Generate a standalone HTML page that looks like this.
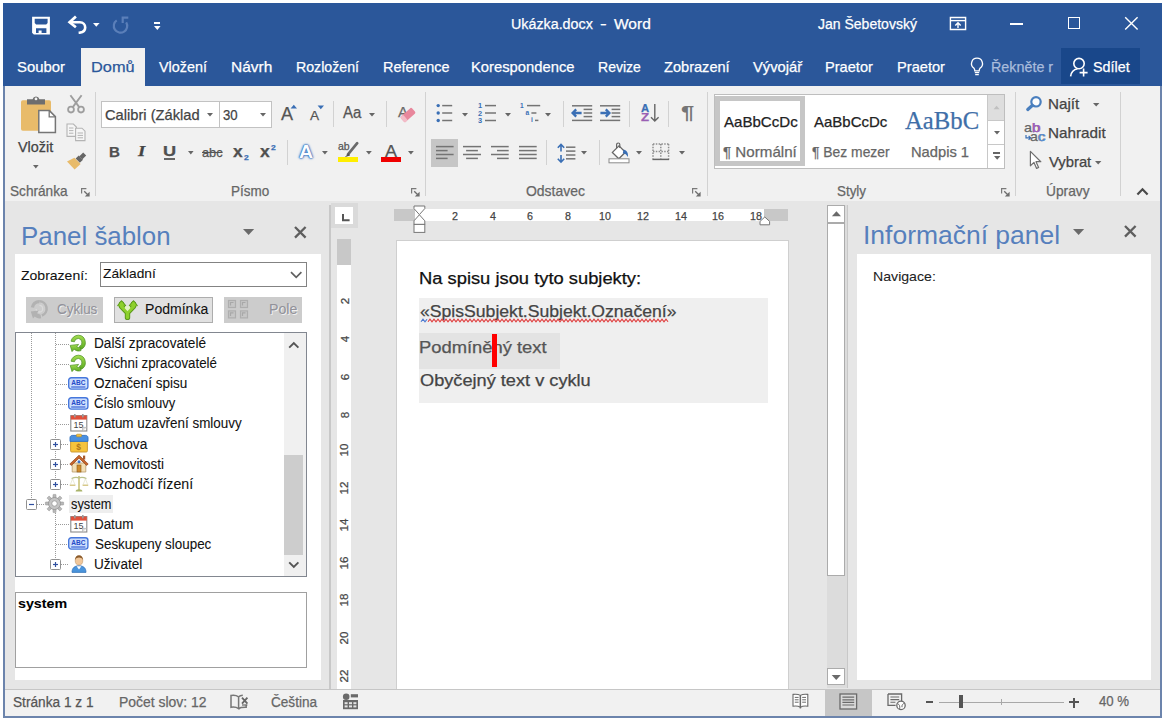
<!DOCTYPE html>
<html><head><meta charset="utf-8"><title>Ukázka.docx - Word</title>
<style>
html,body{margin:0;padding:0;background:#fff;}
body{width:1165px;height:721px;position:relative;overflow:hidden;font-family:"Liberation Sans",sans-serif;}
.r{position:absolute;display:block;overflow:visible;}
.t{position:absolute;white-space:nowrap;transform-origin:0 50%;-webkit-text-stroke-width:.25px;}
.ns .t{-webkit-text-stroke-width:.08px;}
#w{position:absolute;left:0;top:0;width:1165px;height:721px;}
</style></head><body><div id="w">
<!-- p_title -->
<div class="r" style="left:3.2px;top:3.1px;width:1158.7px;height:714px;background:#e6e6e6;"></div>
<div class="r" style="left:3.2px;top:3.1px;width:1158.7px;height:82.7px;background:#2b579a;"></div>
<svg class="r" style="left:31px;top:16px;" width="20" height="20" viewBox="0 0 20 20"><path d="M1.100 .800h17.800v17.600H2.800L1.100 16.700z" fill="#fff"/><path d="M3.700 2.700h12.900v4.300l-1.400 1.400H5.100L3.700 7z" fill="#2b579a"/><path d="M5 12.200h10.400v4.900h-4.800v-2.500H7.600v2.500H5z" fill="#2b579a"/></svg>
<svg class="r" style="left:67px;top:15px;" width="21" height="20" viewBox="0 0 21 20"><path d="M2.600 7.300h10.200c3.400 0 5.400 2.400 5.400 5.200 0 2.700-2 4.700-5.400 5.100l-1.200 .100" fill="none" stroke="#fff" stroke-width="2.600"/><path d="M8.900 1.600L2.600 7.300l6.300 5" fill="none" stroke="#fff" stroke-width="2.700"/></svg>
<svg class="r" style="left:92.2px;top:22.1px;" width="8.6" height="5.8" viewBox="0 0 8.6 5.8"><path d="M1 1h6.6l-3.3 3.8z" fill="#fff"/></svg>
<svg class="r" style="left:111px;top:15px;" width="20" height="20" viewBox="0 0 20 20"><path d="M5.700 5.400A6.700 6.700 0 1 0 15.200 7.400" fill="none" stroke="#5b7fb9" stroke-width="2.200"/><path d="M11.700 8V2.700h5.600" fill="none" stroke="#5b7fb9" stroke-width="2.200"/></svg>
<div class="r" style="left:153.5px;top:22px;width:6.6px;height:1.6px;background:#fff;"></div>
<svg class="r" style="left:152.5px;top:24.95px;" width="8.6" height="5.9" viewBox="0 0 8.6 5.9"><path d="M1 1h6.6l-3.3 3.9z" fill="#fff"/></svg>
<div class="t" style="left:510.73px;top:12.70px;height:22px;line-height:22px;font-size:15.5px;color:#fff;transform:scaleX(0.9220);">Ukázka.docx</div>
<div class="t" style="left:600.20px;top:12.70px;height:22px;line-height:22px;font-size:15.5px;color:#fff;transform:scaleX(1.2903);">-</div>
<div class="t" style="left:614.20px;top:12.70px;height:22px;line-height:22px;font-size:15.5px;color:#fff;transform:scaleX(0.9999);">Word</div>
<div class="t" style="left:817.79px;top:12.70px;height:22px;line-height:22px;font-size:15.5px;color:#fff;transform:scaleX(0.9039);">Jan Šebetovský</div>
<svg class="r" style="left:949px;top:16px;" width="18" height="15" viewBox="0 0 18 15"><path d="M1.4 1.5h15.2v12H1.4z" fill="none" stroke="#fff" stroke-width="1.4"/><path d="M1.4 4.6h15.2" stroke="#fff" stroke-width="1.4"/><path d="M9 12V7M6.3 9.4L9 6.7l2.7 2.7" fill="none" stroke="#fff" stroke-width="1.4"/></svg>
<div class="r" style="left:1010px;top:23px;width:12.5px;height:1.5px;background:#fff;"></div>
<div class="r" style="left:1067.5px;top:16.7px;width:12.2px;height:12.5px;border:1.4px solid #fff;box-sizing:border-box;"></div>
<svg class="r" style="left:1124px;top:15.7px;" width="15" height="15" viewBox="0 0 15 15"><path d="M1.2 1.2l12.4 12.4M13.6 1.2L1.2 13.6" stroke="#fff" stroke-width="1.4"/></svg>
<div class="r" style="left:81.2px;top:48.2px;width:63.5px;height:38px;background:#f1f1f1;"></div>
<div class="t" style="left:16.63px;top:56.40px;height:21px;line-height:21px;font-size:15px;color:#fff;transform:scaleX(0.9921);">Soubor</div>
<div class="t" style="left:158.90px;top:56.40px;height:21px;line-height:21px;font-size:15px;color:#fff;transform:scaleX(0.9575);">Vložení</div>
<div class="t" style="left:230.56px;top:56.40px;height:21px;line-height:21px;font-size:15px;color:#fff;transform:scaleX(1.0323);">Návrh</div>
<div class="t" style="left:296.17px;top:56.40px;height:21px;line-height:21px;font-size:15px;color:#fff;transform:scaleX(0.9439);">Rozložení</div>
<div class="t" style="left:382.64px;top:56.40px;height:21px;line-height:21px;font-size:15px;color:#fff;transform:scaleX(0.9626);">Reference</div>
<div class="t" style="left:471.42px;top:56.40px;height:21px;line-height:21px;font-size:15px;color:#fff;transform:scaleX(0.9857);">Korespondence</div>
<div class="t" style="left:598.18px;top:56.40px;height:21px;line-height:21px;font-size:15px;color:#fff;transform:scaleX(0.9358);">Revize</div>
<div class="t" style="left:663.76px;top:56.40px;height:21px;line-height:21px;font-size:15px;color:#fff;transform:scaleX(0.9724);">Zobrazení</div>
<div class="t" style="left:752.50px;top:56.40px;height:21px;line-height:21px;font-size:15px;color:#fff;transform:scaleX(0.9836);">Vývojář</div>
<div class="t" style="left:825.33px;top:56.40px;height:21px;line-height:21px;font-size:15px;color:#fff;transform:scaleX(0.9733);">Praetor</div>
<div class="t" style="left:896.53px;top:56.40px;height:21px;line-height:21px;font-size:15px;color:#fff;transform:scaleX(0.9754);">Praetor</div>
<div class="t" style="left:91.39px;top:56.40px;height:21px;line-height:21px;font-size:15px;color:#2b579a;transform:scaleX(1.0899);">Domů</div>
<svg class="r" style="left:969px;top:56px;" width="16" height="21" viewBox="0 0 16 21"><path d="M8 2.2a5.4 5.4 0 0 0-3.2 9.8c.8.8 1 1.6 1 2.8h4.4c0-1.2.2-2 1-2.8A5.4 5.4 0 0 0 8 2.2z" fill="none" stroke="#fff" stroke-width="1.3"/><path d="M5.8 16.6h4.4M6.2 18.6h3.6" stroke="#fff" stroke-width="1.2"/></svg>
<div class="t" style="left:990.55px;top:56.40px;height:21px;line-height:21px;font-size:15px;color:#a9bcdc;transform:scaleX(0.9548);">Řekněte r</div>
<div class="r" style="left:1061.3px;top:48.2px;width:78.8px;height:35.8px;background:#19478a;"></div>
<svg class="r" style="left:1068px;top:56px;" width="22" height="23" viewBox="0 0 22 23"><circle cx="11" cy="7.6" r="5.2" fill="none" stroke="#fff" stroke-width="1.6"/><path d="M2.6 20.4c.6-4.4 3.6-7 7-7.6" fill="none" stroke="#fff" stroke-width="1.6"/><path d="M15.6 12.6v8M11.6 16.6h8" stroke="#fff" stroke-width="1.6"/></svg>
<div class="t" style="left:1093.05px;top:56.40px;height:21px;line-height:21px;font-size:15px;color:#fff;transform:scaleX(0.9562);">Sdílet</div>
<!-- p_ribbon -->
<div class="r" style="left:4.8px;top:85.8px;width:1155.3px;height:115.2px;background:#f1f1f1;"></div>
<div class="r" style="left:3.3px;top:85.8px;width:1.7px;height:115.2px;background:#6c84ac;"></div>
<div class="r" style="left:1160.3px;top:85.8px;width:1.6px;height:115.2px;background:#6c84ac;"></div>
<div class="r" style="left:95.0px;top:92px;width:1px;height:104px;background:#d2d2d2;"></div>
<div class="r" style="left:424.8px;top:92px;width:1px;height:104px;background:#d2d2d2;"></div>
<div class="r" style="left:706.8px;top:92px;width:1px;height:104px;background:#d2d2d2;"></div>
<div class="r" style="left:1015.0px;top:92px;width:1px;height:104px;background:#d2d2d2;"></div>
<div class="r" style="left:1120.2px;top:92px;width:1px;height:104px;background:#d2d2d2;"></div>
<div class="r" style="left:333.0px;top:100.5px;width:1px;height:26.5px;background:#d2d2d2;"></div>
<div class="r" style="left:385.8px;top:100.5px;width:1px;height:26.5px;background:#d2d2d2;"></div>
<div class="r" style="left:562.5px;top:100.5px;width:1px;height:26.5px;background:#d2d2d2;"></div>
<div class="r" style="left:628.9px;top:100.5px;width:1px;height:26.5px;background:#d2d2d2;"></div>
<div class="r" style="left:667.9px;top:100.5px;width:1px;height:26.5px;background:#d2d2d2;"></div>
<div class="r" style="left:287.0px;top:139.6px;width:1px;height:25.2px;background:#d2d2d2;"></div>
<div class="r" style="left:546.2px;top:139.6px;width:1px;height:25.2px;background:#d2d2d2;"></div>
<div class="r" style="left:598.9px;top:139.6px;width:1px;height:25.2px;background:#d2d2d2;"></div>
<div class="t" style="left:9.69px;top:180.70px;height:20px;line-height:20px;font-size:14.5px;color:#666;transform:scaleX(0.9393);">Schránka</div>
<div class="t" style="left:230.92px;top:180.70px;height:20px;line-height:20px;font-size:14.5px;color:#666;transform:scaleX(0.9297);">Písmo</div>
<div class="t" style="left:526.37px;top:180.70px;height:20px;line-height:20px;font-size:14.5px;color:#666;transform:scaleX(0.9627);">Odstavec</div>
<div class="t" style="left:836.70px;top:180.70px;height:20px;line-height:20px;font-size:14.5px;color:#666;transform:scaleX(0.9239);">Styly</div>
<div class="t" style="left:1046.47px;top:180.70px;height:20px;line-height:20px;font-size:14.5px;color:#666;transform:scaleX(0.9470);">Úpravy</div>
<svg class="r" style="left:81.2px;top:187.6px;" width="9" height="9" viewBox="0 0 9 9"><path d="M0.600 5.400V0.600H5.400" fill="none" stroke="#7a7a7a" stroke-width="1.200"/><path d="M3.200 3.200l3.600 3.600" fill="none" stroke="#6e6e6e" stroke-width="1.300"/><path d="M8.600 3.800V8.600H3.800z" fill="#6e6e6e"/></svg>
<svg class="r" style="left:410.9px;top:187.6px;" width="9" height="9" viewBox="0 0 9 9"><path d="M0.600 5.400V0.600H5.400" fill="none" stroke="#7a7a7a" stroke-width="1.200"/><path d="M3.200 3.200l3.600 3.600" fill="none" stroke="#6e6e6e" stroke-width="1.300"/><path d="M8.600 3.800V8.600H3.800z" fill="#6e6e6e"/></svg>
<svg class="r" style="left:692.4px;top:187.6px;" width="9" height="9" viewBox="0 0 9 9"><path d="M0.600 5.400V0.600H5.400" fill="none" stroke="#7a7a7a" stroke-width="1.200"/><path d="M3.200 3.200l3.600 3.600" fill="none" stroke="#6e6e6e" stroke-width="1.300"/><path d="M8.600 3.800V8.600H3.800z" fill="#6e6e6e"/></svg>
<svg class="r" style="left:1001px;top:187.6px;" width="9" height="9" viewBox="0 0 9 9"><path d="M0.600 5.400V0.600H5.400" fill="none" stroke="#7a7a7a" stroke-width="1.200"/><path d="M3.200 3.200l3.600 3.600" fill="none" stroke="#6e6e6e" stroke-width="1.300"/><path d="M8.600 3.800V8.600H3.800z" fill="#6e6e6e"/></svg>
<svg class="r" style="left:1136px;top:187px;" width="13" height="9" viewBox="0 0 13 9"><path d="M1.4 7.4L6.5 2.2l5.1 5.2" fill="none" stroke="#4a4a4a" stroke-width="2.200"/></svg>
<svg class="r" style="left:20px;top:95px;" width="38" height="40" viewBox="0 0 38 40"><rect x="1" y="5.200" width="30" height="30.600" rx="1.800" fill="#e8bb6a"/><path d="M7 9.400V4.200h5.600a3.500 3.500 0 0 1 6.800 0H25v5.200z" fill="#6e6e6e"/><circle cx="16" cy="3.900" r="1.400" fill="#f1f1f1"/><path d="M18.8 15.6h10.6l6 6V37.4H18.8z" fill="#fff" stroke="#757575" stroke-width="1.500"/><path d="M29.200 15.800v6h6" fill="none" stroke="#757575" stroke-width="1.300"/></svg>
<div class="t" style="left:17.70px;top:136.50px;height:21px;line-height:21px;font-size:14.8px;color:#444;transform:scaleX(0.9728);">Vložit</div>
<svg class="r" style="left:31.6px;top:164.0px;" width="7.6" height="5.6" viewBox="0 0 7.6 5.6"><path d="M1 1h5.6l-2.8 3.6z" fill="#666"/></svg>
<svg class="r" style="left:66px;top:93.5px;" width="20" height="20" viewBox="0 0 20 20"><path d="M4.4 1.2l9 12.2M15.6 1.2l-9 12.2" stroke="#9e9e9e" stroke-width="1.9" fill="none"/><circle cx="5" cy="15.6" r="2.9" fill="none" stroke="#9e9e9e" stroke-width="1.8"/><circle cx="15" cy="15.6" r="2.9" fill="none" stroke="#9e9e9e" stroke-width="1.8"/></svg>
<svg class="r" style="left:65.5px;top:123px;" width="21" height="19" viewBox="0 0 21 19"><path d="M1 1h6.4l3 3v9.4H1z" fill="#f6f6f6" stroke="#b4b4b4" stroke-width="1.1"/><path d="M3 5h4.4M3 7.6h4.4M3 10.2h4.4" stroke="#b4b4b4" stroke-width="1"/><path d="M9.6 5.2h6.4l3 3v9.4H9.6z" fill="#f6f6f6" stroke="#b4b4b4" stroke-width="1.1"/><path d="M11.6 10h5.4M11.6 12.4h5.4M11.6 14.8h5.4" stroke="#b4b4b4" stroke-width="1"/></svg>
<svg class="r" style="left:66px;top:151.5px;" width="21" height="19" viewBox="0 0 21 19"><path d="M13.4 4.2l3.8-3.6 3 3-3.8 3.6z" fill="#666"/><path d="M9.6 6.6l3.2-3 4.2 4.2-3.2 3z" fill="#666"/><path d="M1 9.6l7.4-3.8 6.2 6.2-6 5.4z" fill="#e8bb6a"/></svg>
<div class="r" style="left:101px;top:100.5px;width:119px;height:27.5px;background:#fff;border:1px solid #c2c2c2;box-sizing:border-box;"></div>
<div class="r" style="left:219px;top:100.5px;width:53.4px;height:27.5px;background:#fff;border:1px solid #c2c2c2;box-sizing:border-box;"></div>
<div class="t" style="left:104.87px;top:104.50px;height:21px;line-height:21px;font-size:14.8px;color:#444;transform:scaleX(0.9919);">Calibri (Základ</div>
<svg class="r" style="left:205.7px;top:111.5px;" width="8" height="5.6" viewBox="0 0 8 5.6"><path d="M1 1h6l-3.0 3.6z" fill="#666"/></svg>
<div class="t" style="left:223.04px;top:104.50px;height:21px;line-height:21px;font-size:14.8px;color:#444;transform:scaleX(0.8901);">30</div>
<svg class="r" style="left:259.4px;top:111.5px;" width="8" height="5.6" viewBox="0 0 8 5.6"><path d="M1 1h6l-3.0 3.6z" fill="#666"/></svg>
<div class="t" style="left:281.00px;top:102.20px;height:25px;line-height:25px;font-size:17.6px;color:#555;transform:scaleX(1.0253);">A</div>
<svg class="r" style="left:289.8px;top:104px;" width="8" height="5" viewBox="0 0 8 5"><path d="M0.6 4.4L3.8 0.8 7 4.4z" fill="#3a6fb5"/></svg>
<div class="t" style="left:309.70px;top:108.20px;height:17px;line-height:17px;font-size:12.4px;color:#555;transform:scaleX(1.1036);">A</div>
<svg class="r" style="left:317.4px;top:104.6px;" width="8" height="5" viewBox="0 0 8 5"><path d="M0.6 0.6h6.4L3.8 4.2z" fill="#3a6fb5"/></svg>
<div class="t" style="left:343.30px;top:101.70px;height:22px;line-height:22px;font-size:15.6px;color:#555;transform:scaleX(0.9628);">Aa</div>
<svg class="r" style="left:367.5px;top:111.8px;" width="8" height="5.6" viewBox="0 0 8 5.6"><path d="M1 1h6l-3.0 3.6z" fill="#666"/></svg>
<div class="t" style="left:397.60px;top:101.00px;height:21px;line-height:21px;font-size:15px;color:#6a6a6a;transform:scaleX(1.0025);">A</div>
<svg class="r" style="left:399px;top:106px;" width="18" height="18" viewBox="0 0 18 18"><g transform="rotate(-42 9 9)"><rect x="1.5" y="5.4" width="15" height="7.2" rx="1.6" fill="#e8879c"/><rect x="1.5" y="5.4" width="4" height="7.2" rx="1.2" fill="#f3bcc8"/></g></svg>
<div class="t" style="left:108.52px;top:140.80px;height:21px;line-height:21px;font-size:15px;color:#505050;font-weight:700;transform:scaleX(1.0081);">B</div>
<div class="t" style="left:138.19px;top:140.30px;height:22px;line-height:22px;font-size:15.5px;color:#444;font-weight:700;font-style:italic;font-family:'Liberation Serif',serif;transform:scaleX(1.2003);">I</div>
<div class="t" style="left:162.91px;top:141.40px;height:20px;line-height:20px;font-size:14.6px;color:#505050;font-weight:700;transform:scaleX(1.2453);">U</div>
<div class="r" style="left:164px;top:158.4px;width:11px;height:1.3px;background:#666;"></div>
<svg class="r" style="left:187.0px;top:149.9px;" width="7.6" height="5.4" viewBox="0 0 7.6 5.4"><path d="M1 1h5.6l-2.8 3.4z" fill="#666"/></svg>
<div class="t" style="left:202.39px;top:143.00px;height:19px;line-height:19px;font-size:13.5px;color:#555;transform:scaleX(0.9445);text-decoration:line-through;">abc</div>
<div class="t" style="left:232.91px;top:140.50px;height:22px;line-height:22px;font-size:16px;color:#505050;font-weight:700;transform:scaleX(1.0894);">x</div>
<div class="t" style="left:243.74px;top:152.50px;height:10px;line-height:10px;font-size:7.4px;color:#3a6fb5;font-weight:700;transform:scaleX(1.1583);">2</div>
<div class="t" style="left:260.31px;top:140.50px;height:22px;line-height:22px;font-size:16px;color:#505050;font-weight:700;transform:scaleX(1.1009);">x</div>
<div class="t" style="left:271.14px;top:143.10px;height:10px;line-height:10px;font-size:7.4px;color:#3a6fb5;font-weight:700;transform:scaleX(1.1583);">2</div>
<div class="t" style="left:299.11px;top:138.90px;height:26px;line-height:26px;font-size:18.4px;color:#fbfdff;font-weight:700;transform:scaleX(1.0628);-webkit-text-stroke:0;text-shadow:0 0 1.2px #3470bd,0 0 1.2px #3470bd,0 0 1.6px #3470bd,0 0 2.4px #6c9bd6,0 0 3px #8fb3e0;">A</div>
<svg class="r" style="left:321.1px;top:149.9px;" width="7.8" height="5.4" viewBox="0 0 7.8 5.4"><path d="M1 1h5.8l-2.9 3.4z" fill="#666"/></svg>
<div class="t" style="left:337.78px;top:139.30px;height:15px;line-height:15px;font-size:11px;color:#555;transform:scaleX(0.9532);">ab</div>
<svg class="r" style="left:342px;top:141px;" width="18" height="18" viewBox="0 0 18 18"><path d="M15.200 2.200L6 13.400" stroke="#6a6a6a" stroke-width="2.700" stroke-linecap="round"/><path d="M6.800 12.200L2.600 16.200l5.400-1.600z" fill="#555"/></svg>
<div class="r" style="left:338px;top:157.2px;width:20px;height:4.7px;background:#ffee00;"></div>
<svg class="r" style="left:365.1px;top:149.9px;" width="7.8" height="5.4" viewBox="0 0 7.8 5.4"><path d="M1 1h5.8l-2.9 3.4z" fill="#666"/></svg>
<div class="t" style="left:385.00px;top:139.00px;height:24px;line-height:24px;font-size:17.2px;color:#555;transform:scaleX(1.0491);">A</div>
<div class="r" style="left:380.6px;top:157.2px;width:20.4px;height:4.7px;background:#f00000;"></div>
<svg class="r" style="left:407.3px;top:149.9px;" width="7.8" height="5.4" viewBox="0 0 7.8 5.4"><path d="M1 1h5.8l-2.9 3.4z" fill="#666"/></svg>
<svg class="r" style="left:436px;top:103px;" width="18" height="20" viewBox="0 0 18 20"><circle cx="2.2" cy="2.6" r="1.7" fill="#3a6fb5"/><path d="M6.2 2.6H16.2" stroke="#747474" stroke-width="1.5"/><circle cx="2.2" cy="10.0" r="1.7" fill="#3a6fb5"/><path d="M6.2 10.0H16.2" stroke="#747474" stroke-width="1.5"/><circle cx="2.2" cy="17.5" r="1.7" fill="#3a6fb5"/><path d="M6.2 17.5H16.2" stroke="#747474" stroke-width="1.5"/></svg>
<svg class="r" style="left:461.2px;top:111.8px;" width="8" height="5.6" viewBox="0 0 8 5.6"><path d="M1 1h6l-3.0 3.6z" fill="#666"/></svg>
<svg class="r" style="left:478.2px;top:103px;" width="19" height="21" viewBox="0 0 19 21"><text x="0" y="5.2" font-size="7.4" font-weight="700" fill="#3a6fb5" font-family="Liberation Sans">1</text><path d="M7 2.6H18" stroke="#747474" stroke-width="1.5"/><text x="0" y="12.6" font-size="7.4" font-weight="700" fill="#3a6fb5" font-family="Liberation Sans">2</text><path d="M7 10.0H18" stroke="#747474" stroke-width="1.5"/><text x="0" y="20.1" font-size="7.4" font-weight="700" fill="#3a6fb5" font-family="Liberation Sans">3</text><path d="M7 17.5H18" stroke="#747474" stroke-width="1.5"/></svg>
<svg class="r" style="left:503.9px;top:111.8px;" width="8" height="5.6" viewBox="0 0 8 5.6"><path d="M1 1h6l-3.0 3.6z" fill="#666"/></svg>
<svg class="r" style="left:519.9px;top:103px;" width="21" height="21" viewBox="0 0 21 21"><text x="0" y="5" font-size="6.6" font-weight="700" fill="#3a6fb5" font-family="Liberation Sans">1</text><path d="M7 2.6H20.2" stroke="#747474" stroke-width="1.5"/><text x="5.4" y="12" font-size="6.6" font-weight="700" fill="#3a6fb5" font-family="Liberation Sans">a</text><path d="M11.4 10H16.4" stroke="#747474" stroke-width="1.5"/><text x="11" y="19.4" font-size="6.6" font-weight="700" fill="#3a6fb5" font-family="Liberation Sans">i</text><path d="M15 17.4H18.4" stroke="#747474" stroke-width="1.5"/></svg>
<svg class="r" style="left:544.0px;top:111.8px;" width="8" height="5.6" viewBox="0 0 8 5.6"><path d="M1 1h6l-3.0 3.6z" fill="#666"/></svg>
<svg class="r" style="left:572.3px;top:105px;" width="21" height="17" viewBox="0 0 21 17"><path d="M0 0.8H20.2" stroke="#747474" stroke-width="1.5"/><path d="M11.6 4.4H20.2" stroke="#747474" stroke-width="1.5"/><path d="M11.6 8H20.2" stroke="#747474" stroke-width="1.5"/><path d="M11.6 11.6H20.2" stroke="#747474" stroke-width="1.5"/><path d="M0 15.4H20.2" stroke="#747474" stroke-width="1.5"/><path d="M0.6 8H9.6M4.2 4.4L0.6 8l3.6 3.6" fill="none" stroke="#3a6fb5" stroke-width="2.300"/></svg>
<svg class="r" style="left:600px;top:105px;" width="21" height="17" viewBox="0 0 21 17"><path d="M0 0.8H20.2" stroke="#747474" stroke-width="1.5"/><path d="M11.6 4.4H20.2" stroke="#747474" stroke-width="1.5"/><path d="M11.6 8H20.2" stroke="#747474" stroke-width="1.5"/><path d="M11.6 11.6H20.2" stroke="#747474" stroke-width="1.5"/><path d="M0 15.4H20.2" stroke="#747474" stroke-width="1.5"/><path d="M0.4 8H9.4M5.8 4.4L9.4 8 5.8 11.6" fill="none" stroke="#3a6fb5" stroke-width="2.300"/></svg>
<div class="t" style="left:640.72px;top:100.50px;height:15px;line-height:15px;font-size:10.6px;color:#3a6fb5;font-weight:700;transform:scaleX(1.0622);">A</div>
<div class="t" style="left:640.67px;top:110.30px;height:15px;line-height:15px;font-size:10.6px;color:#9a5fb4;font-weight:700;transform:scaleX(1.2466);">Z</div>
<svg class="r" style="left:650px;top:103px;" width="10" height="20" viewBox="0 0 10 20"><path d="M4.8 1V18M1 14.2l3.8 3.8 3.8-3.8" fill="none" stroke="#666" stroke-width="1.4"/></svg>
<div class="t" style="left:680.88px;top:100.10px;height:26px;line-height:26px;font-size:18.6px;color:#757575;font-weight:700;transform:scaleX(1.2816);-webkit-text-stroke-width:0;">¶</div>
<div class="r" style="left:431px;top:138.7px;width:27px;height:28.7px;background:#c6c6c6;"></div>
<svg class="r" style="left:436px;top:144px;" width="19" height="17" viewBox="0 0 19 17"><path d="M0.0 2.6H17.6" stroke="#747474" stroke-width="1.5"/><path d="M0.0 6.6H11.6" stroke="#747474" stroke-width="1.5"/><path d="M0.0 10.5H17.6" stroke="#747474" stroke-width="1.5"/><path d="M0.0 14.4H11.6" stroke="#747474" stroke-width="1.5"/></svg>
<svg class="r" style="left:463.2px;top:144px;" width="19" height="17" viewBox="0 0 19 17"><path d="M0.0 2.6H18.0" stroke="#747474" stroke-width="1.5"/><path d="M3.1 6.6H14.9" stroke="#747474" stroke-width="1.5"/><path d="M0.0 10.5H18.0" stroke="#747474" stroke-width="1.5"/><path d="M3.1 14.4H14.9" stroke="#747474" stroke-width="1.5"/></svg>
<svg class="r" style="left:491px;top:144px;" width="19" height="17" viewBox="0 0 19 17"><path d="M0.0 2.6H17.7" stroke="#747474" stroke-width="1.5"/><path d="M6.0 6.6H17.7" stroke="#747474" stroke-width="1.5"/><path d="M0.0 10.5H17.7" stroke="#747474" stroke-width="1.5"/><path d="M6.0 14.4H17.7" stroke="#747474" stroke-width="1.5"/></svg>
<svg class="r" style="left:518.5px;top:144px;" width="19" height="17" viewBox="0 0 19 17"><path d="M0.0 2.6H17.7" stroke="#747474" stroke-width="1.5"/><path d="M0.0 6.6H17.7" stroke="#747474" stroke-width="1.5"/><path d="M0.0 10.5H17.7" stroke="#747474" stroke-width="1.5"/><path d="M0.0 14.4H17.7" stroke="#747474" stroke-width="1.5"/></svg>
<svg class="r" style="left:556.5px;top:142.5px;" width="20" height="21" viewBox="0 0 20 21"><path d="M4 1.400V8.400M4 12V19.200M0.800 4.800L4 1.400l3.200 3.400M0.800 15.800l3.200 3.400L7.200 15.800" fill="none" stroke="#3a6fb5" stroke-width="1.600"/><path d="M9 4.2H18.4" stroke="#747474" stroke-width="1.5"/><path d="M9 8.1H18.4" stroke="#747474" stroke-width="1.5"/><path d="M9 12H18.4" stroke="#747474" stroke-width="1.5"/><path d="M9 15.8H18.4" stroke="#747474" stroke-width="1.5"/></svg>
<svg class="r" style="left:580.3px;top:149.8px;" width="8" height="5.6" viewBox="0 0 8 5.6"><path d="M1 1h6l-3.0 3.6z" fill="#666"/></svg>
<svg class="r" style="left:608px;top:141.5px;" width="22" height="22" viewBox="0 0 22 22"><path d="M4.4 10.4l6.6-6.6 6.4 6.4-6.6 6.6z" fill="#fff" stroke="#666" stroke-width="1.3"/><path d="M8.6 6V2.6a1.6 1.6 0 0 1 3.2 0V6" fill="none" stroke="#666" stroke-width="1.2"/><path d="M15.600 7.400c3.400.800 5 3.800 4.200 7.600-1.200-2.600-2.600-3.400-5-3.800z" fill="#3a6fb5"/><rect x="1" y="16.8" width="20" height="4" fill="#fff" stroke="#8a8a8a" stroke-width="1"/></svg>
<svg class="r" style="left:635.3px;top:149.8px;" width="8" height="5.6" viewBox="0 0 8 5.6"><path d="M1 1h6l-3.0 3.6z" fill="#666"/></svg>
<svg class="r" style="left:652px;top:143px;" width="18" height="18" viewBox="0 0 18 18"><path d="M1 1H16.6M1 1V15.6M16.6 1V15.6M8.8 1V15.6M1 8.4H16.6" fill="none" stroke="#8e8e8e" stroke-width="1.500" stroke-dasharray="1.500 1.300"/><path d="M0.4 16.4H17.2" stroke="#666" stroke-width="1.5"/></svg>
<svg class="r" style="left:677.8px;top:149.8px;" width="8" height="5.6" viewBox="0 0 8 5.6"><path d="M1 1h6l-3.0 3.6z" fill="#666"/></svg>
<div class="r" style="left:714.2px;top:93.6px;width:291.2px;height:75.2px;background:#fff;border:1px solid #bebebe;box-sizing:border-box;"></div>
<div class="r" style="left:715.2px;top:96px;width:89.8px;height:69.8px;background:#fff;border:5px solid #c6c6c6;box-sizing:border-box;"></div>
<div class="t" style="left:723.70px;top:111.70px;height:20px;line-height:20px;font-size:14.6px;color:#222;transform:scaleX(1.0320);">AaBbCcDc</div>
<div class="t" style="left:723.17px;top:141.80px;height:20px;line-height:20px;font-size:14.6px;color:#666;transform:scaleX(1.0384);">¶ Normální</div>
<div class="t" style="left:814.20px;top:111.70px;height:20px;line-height:20px;font-size:14.6px;color:#222;transform:scaleX(1.0263);">AaBbCcDc</div>
<div class="t" style="left:811.91px;top:141.80px;height:20px;line-height:20px;font-size:14.6px;color:#666;transform:scaleX(0.9511);">¶ Bez mezer</div>
<div class="t" style="left:905.28px;top:102.80px;height:36px;line-height:36px;font-size:25.6px;color:#3f6fa8;font-family:'Liberation Serif',serif;transform:scaleX(0.9656);">AaBbC</div>
<div class="t" style="left:911.42px;top:141.80px;height:20px;line-height:20px;font-size:14.6px;color:#666;transform:scaleX(1.0077);">Nadpis 1</div>
<div class="r" style="left:988.2px;top:94.6px;width:16.2px;height:25.6px;background:#dedede;"></div>
<div class="r" style="left:987.4px;top:94.6px;width:1px;height:73.2px;background:#c8c8c8;"></div>
<div class="r" style="left:988.2px;top:119.7px;width:16.2px;height:1px;background:#c8c8c8;"></div>
<div class="r" style="left:988.2px;top:143.7px;width:16.2px;height:1px;background:#c8c8c8;"></div>
<svg class="r" style="left:993.2px;top:105px;" width="8" height="5" viewBox="0 0 8 5"><path d="M0.6 4.2L3.6 0.8 6.6 4.2z" fill="#c0c0c0"/></svg>
<svg class="r" style="left:992.6px;top:129.9px;" width="8" height="5.6" viewBox="0 0 8 5.6"><path d="M1 1h6l-3.0 3.6z" fill="#666"/></svg>
<div class="r" style="left:993.2px;top:152.4px;width:7px;height:1.4px;background:#666;"></div>
<svg class="r" style="left:992.5px;top:154.7px;" width="8.4" height="5.8" viewBox="0 0 8.4 5.8"><path d="M1 1h6.4l-3.2 3.8z" fill="#666"/></svg>
<svg class="r" style="left:1025px;top:95px;" width="19" height="17" viewBox="0 0 19 17"><circle cx="11" cy="6.800" r="4.700" fill="#fdfdfd" stroke="#4a7fbe" stroke-width="2.200"/><path d="M7.200 10.600L2.800 14.400" stroke="#4a7fbe" stroke-width="3.300" stroke-linecap="round"/></svg>
<div class="t" style="left:1048.38px;top:94.10px;height:21px;line-height:21px;font-size:14.8px;color:#444;transform:scaleX(1.0263);">Najít</div>
<svg class="r" style="left:1091.8px;top:101.6px;" width="8.4" height="5.6" viewBox="0 0 8.4 5.6"><path d="M1 1h6.4l-3.2 3.6z" fill="#666"/></svg>
<div class="t" style="left:1024.43px;top:120.30px;height:17px;line-height:17px;font-size:12.4px;color:#666;transform:scaleX(1.1588);">ab</div>
<div class="t" style="left:1031.65px;top:120.30px;height:17px;line-height:17px;font-size:12.4px;color:#a55fc0;transform:scaleX(1.2761);">b</div>
<div class="t" style="left:1030.43px;top:128.90px;height:17px;line-height:17px;font-size:12.4px;color:#666;transform:scaleX(1.1404);">ac</div>
<div class="t" style="left:1037.57px;top:128.90px;height:17px;line-height:17px;font-size:12.4px;color:#5b8fd0;transform:scaleX(1.2607);">c</div>
<svg class="r" style="left:1025px;top:134px;" width="7" height="7" viewBox="0 0 7 7"><path d="M1 1v2.8h4.4M3.6 1.8l2 2-2 2" fill="none" stroke="#3a6fb5" stroke-width="1.2"/></svg>
<div class="t" style="left:1048.38px;top:123.10px;height:21px;line-height:21px;font-size:14.8px;color:#444;transform:scaleX(1.0313);">Nahradit</div>
<svg class="r" style="left:1029px;top:150px;" width="14" height="21" viewBox="0 0 14 21"><path d="M1.4 1.4v14.4l3.6-3.4 2.6 6 2-0.9-2.6-5.8h4.8z" fill="#fff" stroke="#6e6e6e" stroke-width="1.200" stroke-linejoin="round"/></svg>
<div class="t" style="left:1049.00px;top:151.50px;height:21px;line-height:21px;font-size:14.8px;color:#444;transform:scaleX(1.0005);">Vybrat</div>
<svg class="r" style="left:1094.2px;top:159.6px;" width="8.4" height="5.6" viewBox="0 0 8.4 5.6"><path d="M1 1h6.4l-3.2 3.6z" fill="#666"/></svg>
<!-- p_left -->
<div class="ns"><div class="r" style="left:3.3px;top:201px;width:1.7px;height:516px;background:#6c84ac;"></div>
<div class="t" style="left:21.23px;top:217.50px;height:37px;line-height:37px;font-size:26.4px;color:#5680bd;transform:scaleX(0.9806);-webkit-text-stroke-width:0;">Panel šablon</div>
<svg class="r" style="left:242px;top:228px;" width="14" height="8" viewBox="0 0 14 8"><path d="M1 1.100h11.200L6.600 6.900z" fill="#6a6a6a"/></svg>
<svg class="r" style="left:293px;top:224.5px;" width="15" height="15" viewBox="0 0 15 15"><path d="M2 2l10.600 10.600M12.600 2L2 12.600" stroke="#5e5e5e" stroke-width="2.300"/></svg>
<div class="r" style="left:14.6px;top:254px;width:306px;height:425.7px;background:#fff;"></div>
<div class="t" style="left:20.58px;top:265.60px;height:19px;line-height:19px;font-size:13.6px;color:#111;transform:scaleX(1.0308);">Zobrazení:</div>
<div class="r" style="left:100px;top:261.7px;width:206.6px;height:25.7px;background:#fff;border:1px solid #838383;box-sizing:border-box;"></div>
<div class="t" style="left:103.49px;top:264.40px;height:19px;line-height:19px;font-size:13.6px;color:#111;transform:scaleX(1.0126);">Základní</div>
<svg class="r" style="left:289.5px;top:271px;" width="13" height="8" viewBox="0 0 13 8"><path d="M1 1.200l5.200 5.200 5.200-5.200" fill="none" stroke="#606060" stroke-width="1.700"/></svg>
<div class="r" style="left:26.2px;top:296.5px;width:77.1px;height:26.2px;background:#cccccc;"></div>
<svg class="r" style="left:30.4px;top:299.6px;" width="18" height="20" viewBox="0 0 18 20"><path d="M9.200 1.600a7 7 0 0 1 2.600 13.500" fill="none" stroke="#b2b2b2" stroke-width="3.400"/><path d="M9.200 1.600a7 7 0 0 0-6.800 6" fill="none" stroke="#b2b2b2" stroke-width="3.400"/><path d="M9.400 5.400a3.300 3.300 0 1 1-3.300 3.600" fill="none" stroke="#dadada" stroke-width="1.300"/><path d="M.800 11.400l8-.800-1.800 2.600 3.600 1.600.600 3.400c-2.600.800-5-.200-6.400-1.600L3 18.400z" fill="#b2b2b2"/><path d="M9.200 3a5.600 5.600 0 0 1 2 10.800" fill="none" stroke="#cfcfcf" stroke-width="1.200"/></svg>
<div class="t" style="left:56.63px;top:298.60px;height:20px;line-height:20px;font-size:14px;color:#92929a;transform:scaleX(0.9605);text-shadow:1px 1px 0 #f0f0f0;">Cyklus</div>
<div class="r" style="left:113.6px;top:296.5px;width:99.8px;height:26.2px;background:#e1e1e1;border:1px solid #adadad;box-sizing:border-box;"></div>
<svg class="r" style="left:117px;top:299.6px;" width="21" height="20" viewBox="0 0 21 20"><g fill="none" stroke-linejoin="round" stroke-linecap="round"><path d="M4.500 4v2.400l6 6.200V17.400M16.500 4v2.400l-6 6.200" stroke="#5c9a1c" stroke-width="5.400"/><path d="M.800 5.600L4.500.800 8.600 5.600zM12.400 5.600L16.500.800l3.700 4.800z" fill="#5c9a1c" stroke="#5c9a1c" stroke-width="1.200"/><path d="M4.500 4v2.400l6 6.200V17.400M16.500 4v2.400l-6 6.200" stroke="#8ed02c" stroke-width="3.400"/><path d="M1.800 5.200L4.500 1.800 7.400 5.200zM13.400 5.200L16.500 1.800l2.700 3.400z" fill="#8ed02c" stroke="#8ed02c" stroke-width=".600"/></g><path d="M10.500 11.200L7.800 8.200a1.700 1.700 0 0 1 2.700-1.800 1.700 1.700 0 0 1 2.700 1.800z" fill="#e4f4c4"/></svg>
<div class="t" style="left:144.68px;top:298.60px;height:20px;line-height:20px;font-size:14px;color:#111;transform:scaleX(1.0040);">Podmínka</div>
<div class="r" style="left:224px;top:296.5px;width:77.6px;height:26.2px;background:#cccccc;"></div>
<svg class="r" style="left:227.8px;top:300.4px;" width="21" height="19" viewBox="0 0 21 19"><rect x="0.5" y="0.5" width="7" height="7" fill="#c6c6c6" stroke="#aeaeae" stroke-width="1.200"/><path d="M2.5 5.5v-3h3" fill="none" stroke="#a8a8a8" stroke-width="1.200"/><rect x="12.5" y="0.5" width="7" height="7" fill="#c6c6c6" stroke="#aeaeae" stroke-width="1.200"/><path d="M14.5 5.5v-3h3" fill="none" stroke="#a8a8a8" stroke-width="1.200"/><rect x="0.5" y="10.9" width="7" height="7" fill="#c6c6c6" stroke="#aeaeae" stroke-width="1.200"/><path d="M2.5 15.9v-3h3" fill="none" stroke="#a8a8a8" stroke-width="1.200"/><rect x="12.5" y="10.9" width="7" height="7" fill="#c6c6c6" stroke="#aeaeae" stroke-width="1.200"/><path d="M14.5 15.9v-3h3" fill="none" stroke="#a8a8a8" stroke-width="1.200"/></svg>
<div class="t" style="left:268.57px;top:298.60px;height:20px;line-height:20px;font-size:14px;color:#92929a;transform:scaleX(1.0106);text-shadow:1px 1px 0 #f0f0f0;">Pole</div>
<div class="r" style="left:14.6px;top:331.8px;width:292.2px;height:245.7px;background:#fff;border:1px solid #828790;box-sizing:border-box;"></div>
<div class="r" style="left:284.3px;top:332.8px;width:21.5px;height:243.7px;background:#f0f0f0;"></div>
<div class="r" style="left:284.3px;top:454.7px;width:19px;height:100px;background:#cdcdcd;"></div>
<svg class="r" style="left:288px;top:341px;" width="12" height="8" viewBox="0 0 12 8"><path d="M1.200 6.600l4.600-4.600 4.600 4.600" fill="none" stroke="#555" stroke-width="1.900"/></svg>
<svg class="r" style="left:288px;top:561.4px;" width="12" height="8" viewBox="0 0 12 8"><path d="M1.200 1.400l4.600 4.600 4.600-4.600" fill="none" stroke="#555" stroke-width="1.900"/></svg>
<div class="r" style="left:31px;top:333px;width:1px;height:166px;background:repeating-linear-gradient(to bottom,#9a9a9a 0,#9a9a9a 1px,transparent 1px,transparent 2px);"></div>
<div class="r" style="left:55px;top:333px;width:1px;height:156px;background:repeating-linear-gradient(to bottom,#9a9a9a 0,#9a9a9a 1px,transparent 1px,transparent 2px);"></div>
<div class="r" style="left:55px;top:513px;width:1px;height:52px;background:repeating-linear-gradient(to bottom,#9a9a9a 0,#9a9a9a 1px,transparent 1px,transparent 2px);"></div>
<div class="r" style="left:56px;top:344px;width:13px;height:1px;background:repeating-linear-gradient(to right,#9a9a9a 0,#9a9a9a 1px,transparent 1px,transparent 2px);"></div>
<svg class="r" style="left:69px;top:333.79999999999995px;" width="18" height="19" viewBox="0 0 18 19"><defs><linearGradient id="gl" x1="0" y1="0" x2="0" y2="1"><stop offset="0" stop-color="#a4de50"/><stop offset="1" stop-color="#5aa822"/></linearGradient></defs><path d="M9.6 1.2a7.4 7.4 0 0 1 2.2 14.2l-1.4-3a4.2 4.2 0 0 0-1-8 4.2 4.2 0 0 0-4 3.4l-3.4-.6A7.6 7.6 0 0 1 9.6 1.2z" fill="url(#gl)" stroke="#4a8f1e" stroke-width=".7"/><path d="M1.2 11.4l8.4-1-1.8 2.4c1 .8 2.2.9 3.2.6l1 3.2c-2.600 1-5.200.2-6.800-1.400L3 17.600z" fill="url(#gl)" stroke="#4a8f1e" stroke-width=".7"/></svg>
<div class="t" style="left:94.01px;top:333.40px;height:20px;line-height:20px;font-size:14px;color:#111;transform:scaleX(0.9729);">Další zpracovatelé</div>
<div class="r" style="left:56px;top:364px;width:13px;height:1px;background:repeating-linear-gradient(to right,#9a9a9a 0,#9a9a9a 1px,transparent 1px,transparent 2px);"></div>
<svg class="r" style="left:69px;top:353.79999999999995px;" width="18" height="19" viewBox="0 0 18 19"><defs><linearGradient id="gl" x1="0" y1="0" x2="0" y2="1"><stop offset="0" stop-color="#a4de50"/><stop offset="1" stop-color="#5aa822"/></linearGradient></defs><path d="M9.6 1.2a7.4 7.4 0 0 1 2.2 14.2l-1.4-3a4.2 4.2 0 0 0-1-8 4.2 4.2 0 0 0-4 3.4l-3.4-.6A7.6 7.6 0 0 1 9.6 1.2z" fill="url(#gl)" stroke="#4a8f1e" stroke-width=".7"/><path d="M1.2 11.4l8.4-1-1.8 2.4c1 .8 2.2.9 3.2.6l1 3.2c-2.600 1-5.200.2-6.800-1.400L3 17.600z" fill="url(#gl)" stroke="#4a8f1e" stroke-width=".7"/></svg>
<div class="t" style="left:95.10px;top:353.40px;height:20px;line-height:20px;font-size:14px;color:#111;transform:scaleX(0.9498);">Všichni zpracovatelé</div>
<div class="r" style="left:56px;top:384px;width:13px;height:1px;background:repeating-linear-gradient(to right,#9a9a9a 0,#9a9a9a 1px,transparent 1px,transparent 2px);"></div>
<svg class="r" style="left:68px;top:377.0px;" width="21" height="13" viewBox="0 0 21 13"><rect x=".700" y=".700" width="19.200" height="11.400" rx="2.600" fill="#cddefc" stroke="#4677dc" stroke-width="1.400"/><text x="3.200" y="8.200" font-size="7.400" font-weight="700" fill="#2448c8" font-family="Liberation Sans" textLength="14.200" lengthAdjust="spacingAndGlyphs">ABC</text><path d="M3.200 10h14.200" stroke="#3158d4" stroke-width="1.100"/></svg>
<div class="t" style="left:94.49px;top:373.40px;height:20px;line-height:20px;font-size:14px;color:#111;transform:scaleX(0.9661);">Označení spisu</div>
<div class="r" style="left:56px;top:404px;width:13px;height:1px;background:repeating-linear-gradient(to right,#9a9a9a 0,#9a9a9a 1px,transparent 1px,transparent 2px);"></div>
<svg class="r" style="left:68px;top:397.0px;" width="21" height="13" viewBox="0 0 21 13"><rect x=".700" y=".700" width="19.200" height="11.400" rx="2.600" fill="#cddefc" stroke="#4677dc" stroke-width="1.400"/><text x="3.200" y="8.200" font-size="7.400" font-weight="700" fill="#2448c8" font-family="Liberation Sans" textLength="14.200" lengthAdjust="spacingAndGlyphs">ABC</text><path d="M3.200 10h14.200" stroke="#3158d4" stroke-width="1.100"/></svg>
<div class="t" style="left:94.45px;top:393.40px;height:20px;line-height:20px;font-size:14px;color:#111;transform:scaleX(0.9323);">Číslo smlouvy</div>
<div class="r" style="left:56px;top:424px;width:13px;height:1px;background:repeating-linear-gradient(to right,#9a9a9a 0,#9a9a9a 1px,transparent 1px,transparent 2px);"></div>
<svg class="r" style="left:69.6px;top:414.4px;" width="18" height="18" viewBox="0 0 18 18"><rect x=".8" y="1.6" width="16" height="15.4" fill="#fff" stroke="#8a8a8a" stroke-width="1.1"/><rect x=".8" y="1.6" width="16" height="4" fill="#e0503a"/><rect x="4" y="0" width="1.6" height="3.4" fill="#9a9a9a"/><rect x="12" y="0" width="1.6" height="3.4" fill="#9a9a9a"/><text x="3.4" y="14" font-size="8.6" fill="#444" font-family="Liberation Sans" textLength="10" lengthAdjust="spacingAndGlyphs">15</text><path d="M12.6 17v-3.600h4.200" fill="#ddd" stroke="#aaa" stroke-width=".7"/></svg>
<div class="t" style="left:94.03px;top:413.40px;height:20px;line-height:20px;font-size:14px;color:#111;transform:scaleX(0.9585);">Datum uzavření smlouvy</div>
<div class="r" style="left:61px;top:444px;width:8px;height:1px;background:repeating-linear-gradient(to right,#9a9a9a 0,#9a9a9a 1px,transparent 1px,transparent 2px);"></div>
<svg class="r" style="left:50px;top:438.8px;" width="11" height="11" viewBox="0 0 11 11"><rect x=".5" y=".5" width="10" height="10" rx="1" fill="#fff" stroke="#919191" stroke-width="1"/><path d="M3 5.500h5" stroke="#2f4f9f" stroke-width="1.200"/><path d="M5.500 3v5" stroke="#2f4f9f" stroke-width="1.200"/></svg>
<svg class="r" style="left:68.6px;top:433.7px;" width="20" height="19" viewBox="0 0 20 19"><rect x="1.6" y="6.4" width="16.8" height="11.6" rx="1.2" fill="#f6c33c" stroke="#c8932a" stroke-width=".9"/><path d="M1 3.600c0-1.200 1-2.200 2.200-2.200h13.600c1.200 0 2.200 1 2.200 2.200v3.800H1z" fill="#4a90e0" stroke="#2f6fc0" stroke-width=".9"/><rect x="7.4" y="0.200" width="5.200" height="2.600" rx="1" fill="#f0c040" stroke="#b98a20" stroke-width=".6"/><text x="7.300" y="16.400" font-size="8.400" font-weight="700" fill="#b0761a" font-family="Liberation Sans">$</text></svg>
<div class="t" style="left:94.07px;top:433.50px;height:20px;line-height:20px;font-size:14px;color:#111;transform:scaleX(0.9779);">Úschova</div>
<div class="r" style="left:61px;top:464px;width:8px;height:1px;background:repeating-linear-gradient(to right,#9a9a9a 0,#9a9a9a 1px,transparent 1px,transparent 2px);"></div>
<svg class="r" style="left:50px;top:458.9px;" width="11" height="11" viewBox="0 0 11 11"><rect x=".5" y=".5" width="10" height="10" rx="1" fill="#fff" stroke="#919191" stroke-width="1"/><path d="M3 5.500h5" stroke="#2f4f9f" stroke-width="1.200"/><path d="M5.500 3v5" stroke="#2f4f9f" stroke-width="1.200"/></svg>
<svg class="r" style="left:68.6px;top:453.8px;" width="20" height="19" viewBox="0 0 20 19"><path d="M3.200 9v9h13.600V9z" fill="#f3dfb6" stroke="#b89b6a" stroke-width=".8"/><path d="M10 1.200L.8 10l1.600 1.400L10 4.200l7.600 7.200L19.200 10z" fill="#c9652c" stroke="#8c4318" stroke-width=".7"/><rect x="8" y="11" width="4" height="7" fill="#d08a2a" stroke="#8a5a18" stroke-width=".6"/><circle cx="10" cy="7.800" r="1.500" fill="#3a72c8"/><rect x="14" y="1.600" width="2.200" height="4" fill="#a85a30"/></svg>
<div class="t" style="left:94.03px;top:453.60px;height:20px;line-height:20px;font-size:14px;color:#111;transform:scaleX(0.9557);">Nemovitosti</div>
<div class="r" style="left:61px;top:484px;width:8px;height:1px;background:repeating-linear-gradient(to right,#9a9a9a 0,#9a9a9a 1px,transparent 1px,transparent 2px);"></div>
<svg class="r" style="left:50px;top:478.9px;" width="11" height="11" viewBox="0 0 11 11"><rect x=".5" y=".5" width="10" height="10" rx="1" fill="#fff" stroke="#919191" stroke-width="1"/><path d="M3 5.500h5" stroke="#2f4f9f" stroke-width="1.200"/><path d="M5.500 3v5" stroke="#2f4f9f" stroke-width="1.200"/></svg>
<svg class="r" style="left:68.6px;top:474.0px;" width="20" height="19" viewBox="0 0 20 19"><path d="M10 2v14" stroke="#c9c27a" stroke-width="1.600"/><path d="M2.600 4.600c3-1.600 5-1.600 7.400-.6 2.400-1 4.400-1 7.400.6" fill="none" stroke="#b9c089" stroke-width="1.200"/><path d="M.8 11.200h5.600M13.600 11.200h5.600" stroke="#d8c98a" stroke-width="1.600"/><path d="M3.600 4.800L1.200 11M3.600 4.800L6 11M16.400 4.800L14 11M16.400 4.800l2.400 6.200" stroke="#dcdcc0" stroke-width=".6"/><path d="M6.600 17.600c0-1.600 1.600-2.400 3.400-2.400s3.400.8 3.400 2.400z" fill="#a9b36a"/></svg>
<div class="t" style="left:93.97px;top:473.60px;height:20px;line-height:20px;font-size:14px;color:#111;transform:scaleX(1.0105);">Rozhodčí řízení</div>
<div class="r" style="left:68.9px;top:495px;width:44.2px;height:18.4px;background:#eeeeee;"></div>
<div class="r" style="left:37px;top:504px;width:8px;height:1px;background:repeating-linear-gradient(to right,#9a9a9a 0,#9a9a9a 1px,transparent 1px,transparent 2px);"></div>
<svg class="r" style="left:26px;top:499.1px;" width="11" height="11" viewBox="0 0 11 11"><rect x=".5" y=".5" width="10" height="10" rx="1" fill="#fff" stroke="#919191" stroke-width="1"/><path d="M3 5.500h5" stroke="#2f4f9f" stroke-width="1.200"/></svg>
<svg class="r" style="left:44.6px;top:494.40000000000003px;" width="19" height="19" viewBox="0 0 19 19"><rect x="8" y="0.400" width="3" height="4" rx=".5" fill="#b9b9b9" stroke="#8e8e8e" stroke-width=".5" transform="rotate(0 9.500 9.500)"/><rect x="8" y="0.400" width="3" height="4" rx=".5" fill="#b9b9b9" stroke="#8e8e8e" stroke-width=".5" transform="rotate(45 9.500 9.500)"/><rect x="8" y="0.400" width="3" height="4" rx=".5" fill="#b9b9b9" stroke="#8e8e8e" stroke-width=".5" transform="rotate(90 9.500 9.500)"/><rect x="8" y="0.400" width="3" height="4" rx=".5" fill="#b9b9b9" stroke="#8e8e8e" stroke-width=".5" transform="rotate(135 9.500 9.500)"/><rect x="8" y="0.400" width="3" height="4" rx=".5" fill="#b9b9b9" stroke="#8e8e8e" stroke-width=".5" transform="rotate(180 9.500 9.500)"/><rect x="8" y="0.400" width="3" height="4" rx=".5" fill="#b9b9b9" stroke="#8e8e8e" stroke-width=".5" transform="rotate(225 9.500 9.500)"/><rect x="8" y="0.400" width="3" height="4" rx=".5" fill="#b9b9b9" stroke="#8e8e8e" stroke-width=".5" transform="rotate(270 9.500 9.500)"/><rect x="8" y="0.400" width="3" height="4" rx=".5" fill="#b9b9b9" stroke="#8e8e8e" stroke-width=".5" transform="rotate(315 9.500 9.500)"/><circle cx="9.500" cy="9.500" r="6" fill="#c4c4c4" stroke="#8e8e8e" stroke-width=".7"/><circle cx="9.500" cy="9.500" r="2.700" fill="#fff" stroke="#8e8e8e" stroke-width=".7"/></svg>
<div class="t" style="left:70.58px;top:493.80px;height:20px;line-height:20px;font-size:14px;color:#111;transform:scaleX(0.9137);">system</div>
<div class="r" style="left:56px;top:524px;width:13px;height:1px;background:repeating-linear-gradient(to right,#9a9a9a 0,#9a9a9a 1px,transparent 1px,transparent 2px);"></div>
<svg class="r" style="left:69.6px;top:514.7px;" width="18" height="18" viewBox="0 0 18 18"><rect x=".8" y="1.6" width="16" height="15.4" fill="#fff" stroke="#8a8a8a" stroke-width="1.1"/><rect x=".8" y="1.6" width="16" height="4" fill="#e0503a"/><rect x="4" y="0" width="1.6" height="3.4" fill="#9a9a9a"/><rect x="12" y="0" width="1.6" height="3.4" fill="#9a9a9a"/><text x="3.4" y="14" font-size="8.6" fill="#444" font-family="Liberation Sans" textLength="10" lengthAdjust="spacingAndGlyphs">15</text><path d="M12.6 17v-3.600h4.200" fill="#ddd" stroke="#aaa" stroke-width=".7"/></svg>
<div class="t" style="left:94.03px;top:513.70px;height:20px;line-height:20px;font-size:14px;color:#111;transform:scaleX(0.9566);">Datum</div>
<div class="r" style="left:56px;top:544px;width:13px;height:1px;background:repeating-linear-gradient(to right,#9a9a9a 0,#9a9a9a 1px,transparent 1px,transparent 2px);"></div>
<svg class="r" style="left:68px;top:537.3000000000001px;" width="21" height="13" viewBox="0 0 21 13"><rect x=".700" y=".700" width="19.200" height="11.400" rx="2.600" fill="#cddefc" stroke="#4677dc" stroke-width="1.400"/><text x="3.200" y="8.200" font-size="7.400" font-weight="700" fill="#2448c8" font-family="Liberation Sans" textLength="14.200" lengthAdjust="spacingAndGlyphs">ABC</text><path d="M3.200 10h14.200" stroke="#3158d4" stroke-width="1.100"/></svg>
<div class="t" style="left:94.50px;top:533.70px;height:20px;line-height:20px;font-size:14px;color:#111;transform:scaleX(0.9579);">Seskupeny sloupec</div>
<div class="r" style="left:61px;top:564px;width:8px;height:1px;background:repeating-linear-gradient(to right,#9a9a9a 0,#9a9a9a 1px,transparent 1px,transparent 2px);"></div>
<svg class="r" style="left:50px;top:559.0px;" width="11" height="11" viewBox="0 0 11 11"><rect x=".5" y=".5" width="10" height="10" rx="1" fill="#fff" stroke="#919191" stroke-width="1"/><path d="M3 5.500h5" stroke="#2f4f9f" stroke-width="1.200"/><path d="M5.500 3v5" stroke="#2f4f9f" stroke-width="1.200"/></svg>
<svg class="r" style="left:71px;top:553.9000000000001px;" width="16" height="19" viewBox="0 0 16 19"><path d="M1 18.400c0-4.600 2.600-6.600 7-6.600s7 2 7 6.600z" fill="#4a94dc" stroke="#2c6cb4" stroke-width=".7"/><path d="M5.600 12.200L8 15.400l2.400-3.200z" fill="#fff"/><ellipse cx="8" cy="6.600" rx="3.800" ry="4.400" fill="#f1c79a" stroke="#b98a5a" stroke-width=".5"/><path d="M4 6c0-3.200 1.800-4.800 4-4.800s4 1.600 4 4.800c-1-1.600-2.400-2.400-4-2.400S5 4.400 4 6z" fill="#8a5a2a"/></svg>
<div class="t" style="left:94.08px;top:553.70px;height:20px;line-height:20px;font-size:14px;color:#111;transform:scaleX(0.9691);">Uživatel</div>
<div class="r" style="left:14.8px;top:591.5px;width:292px;height:76.5px;background:#fff;border:1px solid #a0a0a0;box-sizing:border-box;"></div>
<div class="t" style="left:17.50px;top:593.90px;height:19px;line-height:19px;font-size:13.6px;color:#000;font-weight:700;transform:scaleX(1.0476);">system</div>
<div class="r" style="left:329.3px;top:205px;width:1.3px;height:484px;background:#c8c8c8;"></div></div>
<!-- p_doc -->
<div class="r" style="left:331.2px;top:202.5px;width:26.5px;height:25.5px;background:#dadada;"></div>
<div class="r" style="left:335.2px;top:207.2px;width:18.3px;height:16.5px;background:#fff;"></div>
<svg class="r" style="left:341px;top:213px;" width="10" height="9" viewBox="0 0 10 9"><path d="M2 1v6.200h6.600" fill="none" stroke="#555" stroke-width="2"/></svg>
<div class="r" style="left:337.1px;top:239.1px;width:13.5px;height:450px;background:#fff;"></div>
<div class="r" style="left:337.1px;top:239.1px;width:13.5px;height:26.1px;background:#c8c8c8;"></div>
<div class="t" style="left:341.7px;top:294.4px;width:6.5px;height:14px;line-height:14px;font-size:11.600px;color:#484848;-webkit-text-stroke-width:.25px;transform-origin:50% 50%;transform:rotate(-90deg);">2</div>
<div class="t" style="left:341.7px;top:331.9px;width:6.5px;height:14px;line-height:14px;font-size:11.600px;color:#484848;-webkit-text-stroke-width:.25px;transform-origin:50% 50%;transform:rotate(-90deg);">4</div>
<div class="t" style="left:341.7px;top:369.8px;width:6.5px;height:14px;line-height:14px;font-size:11.600px;color:#484848;-webkit-text-stroke-width:.25px;transform-origin:50% 50%;transform:rotate(-90deg);">6</div>
<div class="t" style="left:341.7px;top:407.6px;width:6.5px;height:14px;line-height:14px;font-size:11.600px;color:#484848;-webkit-text-stroke-width:.25px;transform-origin:50% 50%;transform:rotate(-90deg);">8</div>
<div class="t" style="left:338.4px;top:442.9px;width:12.9px;height:14px;line-height:14px;font-size:11.600px;color:#484848;-webkit-text-stroke-width:.25px;transform-origin:50% 50%;transform:rotate(-90deg);">10</div>
<div class="t" style="left:338.4px;top:480.5px;width:12.9px;height:14px;line-height:14px;font-size:11.600px;color:#484848;-webkit-text-stroke-width:.25px;transform-origin:50% 50%;transform:rotate(-90deg);">12</div>
<div class="t" style="left:338.4px;top:518.1px;width:12.9px;height:14px;line-height:14px;font-size:11.600px;color:#484848;-webkit-text-stroke-width:.25px;transform-origin:50% 50%;transform:rotate(-90deg);">14</div>
<div class="t" style="left:338.4px;top:555.7px;width:12.9px;height:14px;line-height:14px;font-size:11.600px;color:#484848;-webkit-text-stroke-width:.25px;transform-origin:50% 50%;transform:rotate(-90deg);">16</div>
<div class="t" style="left:338.4px;top:593.3px;width:12.9px;height:14px;line-height:14px;font-size:11.600px;color:#484848;-webkit-text-stroke-width:.25px;transform-origin:50% 50%;transform:rotate(-90deg);">18</div>
<div class="t" style="left:338.4px;top:630.9px;width:12.9px;height:14px;line-height:14px;font-size:11.600px;color:#484848;-webkit-text-stroke-width:.25px;transform-origin:50% 50%;transform:rotate(-90deg);">20</div>
<div class="t" style="left:338.4px;top:668.5px;width:12.9px;height:14px;line-height:14px;font-size:11.600px;color:#484848;-webkit-text-stroke-width:.25px;transform-origin:50% 50%;transform:rotate(-90deg);">22</div>
<div class="r" style="left:394.4px;top:208.6px;width:393.6px;height:12.4px;background:#fff;"></div>
<div class="r" style="left:394.4px;top:208.6px;width:20.6px;height:12.4px;background:#c8c8c8;"></div>
<div class="r" style="left:763.9px;top:208.6px;width:24.1px;height:12.4px;background:#c8c8c8;"></div>
<div class="t" style="left:452.0px;top:207.50px;height:16px;line-height:16px;font-size:11.4px;color:#444;transform:scaleX(0.9400);">2</div>
<div class="t" style="left:489.8px;top:207.50px;height:16px;line-height:16px;font-size:11.4px;color:#444;transform:scaleX(0.9400);">4</div>
<div class="t" style="left:527.2px;top:207.50px;height:16px;line-height:16px;font-size:11.4px;color:#444;transform:scaleX(0.9400);">6</div>
<div class="t" style="left:564.8px;top:207.50px;height:16px;line-height:16px;font-size:11.4px;color:#444;transform:scaleX(0.9400);">8</div>
<div class="t" style="left:599.2px;top:207.50px;height:16px;line-height:16px;font-size:11.4px;color:#444;transform:scaleX(0.9400);">10</div>
<div class="t" style="left:637.0px;top:207.50px;height:16px;line-height:16px;font-size:11.4px;color:#444;transform:scaleX(0.9400);">12</div>
<div class="t" style="left:674.5px;top:207.50px;height:16px;line-height:16px;font-size:11.4px;color:#444;transform:scaleX(0.9400);">14</div>
<div class="t" style="left:712.2px;top:207.50px;height:16px;line-height:16px;font-size:11.4px;color:#444;transform:scaleX(0.9400);">16</div>
<div class="t" style="left:749.5px;top:207.50px;height:16px;line-height:16px;font-size:11.4px;color:#444;transform:scaleX(0.9400);">18</div>
<svg class="r" style="left:412.5px;top:204.5px;" width="14" height="29" viewBox="0 0 14 29"><path d="M1 1h10.800v2.600L6.400 9.600 1 3.600z" fill="#fff" stroke="#777" stroke-width="1"/><path d="M6.400 9.800l5.400 6v3.600H1v-3.600z" fill="#fff" stroke="#777" stroke-width="1"/><rect x="1" y="19.400" width="10.800" height="8" fill="#fff" stroke="#777" stroke-width="1"/></svg>
<svg class="r" style="left:759.3px;top:215.5px;" width="13" height="10" viewBox="0 0 13 10"><path d="M5.800 1l4.800 4.400v3.400H1V5.400z" fill="#fff" stroke="#777" stroke-width="1"/></svg>
<div class="r" style="left:396.2px;top:240.2px;width:392.6px;height:449px;background:#fff;border:1px solid #cfcfcf;border-bottom:none;box-sizing:border-box;"></div>
<div class="r" style="left:419px;top:298.2px;width:348.5px;height:105px;background:#efefef;"></div>
<div class="r" style="left:419px;top:332.6px;width:141.4px;height:36.2px;background:#e3e3e3;"></div>
<div class="t" style="left:419.03px;top:267.70px;height:22px;line-height:22px;font-size:15.8px;color:#111;transform:scaleX(1.1604);-webkit-text-stroke:.25px #111;">Na spisu jsou tyto subjekty:</div>
<div class="t" style="left:419.80px;top:300.60px;height:22px;line-height:22px;font-size:15.8px;color:#444;transform:scaleX(1.1147);">«SpisSubjekt.Subjekt.Označení»</div>
<svg class="r" style="left:420.5px;top:319.9px;" width="8" height="4" viewBox="0 0 8 4"><path d="M0 1.75 l2.00 -2.50 l2.00 2.50 l2.00 -2.50" fill="none" stroke="#4a78d0" stroke-width="1.15"/></svg>
<svg class="r" style="left:428px;top:319.9px;" width="242" height="4" viewBox="0 0 242 4"><path d="M0 1.75 l2.00 -2.50 l2.00 2.50 l2.00 -2.50 l2.00 2.50 l2.00 -2.50 l2.00 2.50 l2.00 -2.50 l2.00 2.50 l2.00 -2.50 l2.00 2.50 l2.00 -2.50 l2.00 2.50 l2.00 -2.50 l2.00 2.50 l2.00 -2.50 l2.00 2.50 l2.00 -2.50 l2.00 2.50 l2.00 -2.50 l2.00 2.50 l2.00 -2.50 l2.00 2.50 l2.00 -2.50 l2.00 2.50 l2.00 -2.50 l2.00 2.50 l2.00 -2.50 l2.00 2.50 l2.00 -2.50 l2.00 2.50 l2.00 -2.50 l2.00 2.50 l2.00 -2.50 l2.00 2.50 l2.00 -2.50 l2.00 2.50 l2.00 -2.50 l2.00 2.50 l2.00 -2.50 l2.00 2.50 l2.00 -2.50 l2.00 2.50 l2.00 -2.50 l2.00 2.50 l2.00 -2.50 l2.00 2.50 l2.00 -2.50 l2.00 2.50 l2.00 -2.50 l2.00 2.50 l2.00 -2.50 l2.00 2.50 l2.00 -2.50 l2.00 2.50 l2.00 -2.50 l2.00 2.50 l2.00 -2.50 l2.00 2.50 l2.00 -2.50 l2.00 2.50 l2.00 -2.50 l2.00 2.50 l2.00 -2.50 l2.00 2.50 l2.00 -2.50 l2.00 2.50 l2.00 -2.50 l2.00 2.50 l2.00 -2.50 l2.00 2.50 l2.00 -2.50 l2.00 2.50 l2.00 -2.50 l2.00 2.50 l2.00 -2.50 l2.00 2.50 l2.00 -2.50 l2.00 2.50 l2.00 -2.50 l2.00 2.50 l2.00 -2.50 l2.00 2.50 l2.00 -2.50 l2.00 2.50 l2.00 -2.50 l2.00 2.50 l2.00 -2.50 l2.00 2.50 l2.00 -2.50 l2.00 2.50 l2.00 -2.50 l2.00 2.50 l2.00 -2.50 l2.00 2.50 l2.00 -2.50 l2.00 2.50 l2.00 -2.50 l2.00 2.50 l2.00 -2.50 l2.00 2.50 l2.00 -2.50 l2.00 2.50 l2.00 -2.50 l2.00 2.50 l2.00 -2.50 l2.00 2.50 l2.00 -2.50 l2.00 2.50 l2.00 -2.50 l2.00 2.50 l2.00 -2.50 l2.00 2.50 l2.00 -2.50 l2.00 2.50 l2.00 -2.50 l2.00 2.50 l2.00 -2.50 l2.00 2.50 l2.00 -2.50 l2.00 2.50" fill="none" stroke="#e03c3c" stroke-width="1.15"/></svg>
<div class="t" style="left:419.03px;top:336.60px;height:22px;line-height:22px;font-size:15.8px;color:#555;transform:scaleX(1.1626);">Podmíněný text</div>
<div class="r" style="left:491.6px;top:334.4px;width:5.1px;height:32.8px;background:#ff0000;"></div>
<div class="t" style="left:419.68px;top:369.80px;height:22px;line-height:22px;font-size:15.8px;color:#444;transform:scaleX(1.1506);">Obyčejný text v cyklu</div>
<div class="r" style="left:827.2px;top:205.3px;width:20px;height:483px;background:#dcdcdc;"></div>
<div class="r" style="left:847.2px;top:205.3px;width:1px;height:483px;background:#c8c8c8;"></div>
<div class="r" style="left:827.2px;top:205.3px;width:18.2px;height:18px;background:#fff;border:1px solid #ababab;box-sizing:border-box;"></div>
<svg class="r" style="left:831px;top:210px;" width="11" height="8" viewBox="0 0 11 8"><path d="M.900 6.300L5.450 1.300 10 6.300z" fill="#6a6a6a"/></svg>
<div class="r" style="left:827.2px;top:223.3px;width:18.2px;height:353px;background:#fff;border:1px solid #ababab;box-sizing:border-box;"></div>
<div class="r" style="left:827.2px;top:667.5px;width:18.2px;height:17.8px;background:#fff;border:1px solid #ababab;box-sizing:border-box;"></div>
<svg class="r" style="left:831px;top:673.6px;" width="11" height="8" viewBox="0 0 11 8"><path d="M.700 1h9.100L5.250 6z" fill="#6a6a6a"/></svg>
<!-- p_right -->
<div class="ns"><div class="r" style="left:1160.3px;top:201px;width:1.6px;height:516px;background:#6c84ac;"></div>
<div class="t" style="left:863.22px;top:217.30px;height:37px;line-height:37px;font-size:26.4px;color:#5680bd;transform:scaleX(1.0027);-webkit-text-stroke-width:0;">Informační panel</div>
<svg class="r" style="left:1072px;top:228px;" width="14" height="8" viewBox="0 0 14 8"><path d="M1 1.100h11.200L6.600 6.900z" fill="#6a6a6a"/></svg>
<svg class="r" style="left:1122.8px;top:224.3px;" width="15" height="15" viewBox="0 0 15 15"><path d="M2 2l10.600 10.600M12.600 2L2 12.600" stroke="#5e5e5e" stroke-width="2.300"/></svg>
<div class="r" style="left:856.8px;top:254.1px;width:294px;height:425.6px;background:#fff;"></div>
<div class="t" style="left:872.67px;top:267.00px;height:19px;line-height:19px;font-size:13.6px;color:#222;transform:scaleX(1.0394);">Navigace:</div></div>
<!-- p_status -->
<div class="r" style="left:4.9px;top:688.5px;width:1155.1px;height:27.2px;background:#f1f1f1;"></div>
<div class="r" style="left:4.9px;top:688.7px;width:1155.1px;height:1.1px;background:#c6c6c6;"></div>
<div class="r" style="left:3.2px;top:715.8px;width:1158.7px;height:1.9px;background:#6c84ac;"></div>
<div class="t" style="left:13.28px;top:692.20px;height:20px;line-height:20px;font-size:14px;color:#555;transform:scaleX(0.9766);">Stránka 1 z 1</div>
<div class="t" style="left:119.08px;top:691.80px;height:20px;line-height:20px;font-size:14px;color:#666;transform:scaleX(0.9957);">Počet slov: 12</div>
<svg class="r" style="left:229.5px;top:693.5px;" width="20" height="17" viewBox="0 0 20 17"><path d="M8.600 2.800C6.400 1.300 3.600 1.100 1 1.500v11.800c2.600-.400 5.400-.200 7.600 1.300z" fill="none" stroke="#777" stroke-width="1.500"/><path d="M8.600 2.800c1-.900 2.600-1.400 4.200-1.500M8.600 14.600c1.400-1 3.600-1.400 7.600-1.300V10.800" fill="none" stroke="#777" stroke-width="1.500"/><path d="M12 3.600l5.400 6M17.400 3.600l-5.400 6" stroke="#666" stroke-width="1.800"/><path d="M12 11h5.400" stroke="#666" stroke-width="1.200"/></svg>
<div class="t" style="left:270.52px;top:691.80px;height:20px;line-height:20px;font-size:14px;color:#666;transform:scaleX(0.9695);">Čeština</div>
<svg class="r" style="left:342px;top:693.4px;" width="17" height="17" viewBox="0 0 17 17"><circle cx="4.200" cy="3.800" r="3.300" fill="#6a6a6a"/><rect x="8.800" y="1.200" width="7.200" height="3.200" fill="#6a6a6a"/><rect x="1" y="7" width="15" height="9.200" fill="#6a6a6a"/><rect x="2.6" y="9.2" width="3" height="2" fill="#e4e4e4"/><rect x="2.6" y="12.4" width="3" height="2" fill="#e4e4e4"/><rect x="7.0" y="9.2" width="3" height="2" fill="#e4e4e4"/><rect x="7.0" y="12.4" width="3" height="2" fill="#e4e4e4"/><rect x="11.4" y="9.2" width="3" height="2" fill="#e4e4e4"/><rect x="11.4" y="12.4" width="3" height="2" fill="#e4e4e4"/></svg>
<svg class="r" style="left:791.5px;top:693px;" width="17" height="16" viewBox="0 0 17 16"><path d="M8.400 2.400C6.400 1.200 3.600 1 1 1.400v11.800c2.600-.400 5.400-.200 7.400 1zM8.400 2.400C10.400 1.200 13.200 1 15.800 1.400v11.800c-2.600-.400-5.400-.200-7.400 1z" fill="#fff" stroke="#6a6a6a" stroke-width="1.100"/><path d="M2.800 4.400h3.800M2.800 6.800h3.800M2.800 9.200h3.800M10.200 4.400H14M10.200 6.800H14M10.200 9.200H14" stroke="#6a6a6a" stroke-width="1"/><path d="M8.400 2.400v13" stroke="#6a6a6a" stroke-width="1.400"/></svg>
<div class="r" style="left:825px;top:689.4px;width:46.8px;height:26.2px;background:#c6c6c6;"></div>
<svg class="r" style="left:839px;top:693px;" width="19" height="17" viewBox="0 0 19 17"><rect x="1" y="1" width="16.600" height="15" fill="#d8d8d8" stroke="#6a6a6a" stroke-width="1.300"/><path d="M3.400 4.200h11.800M3.400 6.800h11.800M3.400 9.400h11.800M3.400 12h11.800" stroke="#6a6a6a" stroke-width="1.200"/></svg>
<svg class="r" style="left:886.5px;top:693px;" width="20" height="18" viewBox="0 0 20 18"><path d="M1 1h13.600v7.600M1 1v11.400h7.600" fill="none" stroke="#6a6a6a" stroke-width="1.300"/><path d="M3.400 4h8.800M3.400 6.600h8.800M3.400 9.200h5" stroke="#6a6a6a" stroke-width="1.100"/><circle cx="14" cy="12.400" r="4.200" fill="#fff" stroke="#6a6a6a" stroke-width="1.300"/><path d="M10.600 10.600c2 1 2.600 2.600 2 5.600M17.600 10.200c-2 .6-3 2-2.600 4" fill="none" stroke="#6a6a6a" stroke-width="1"/></svg>
<div class="r" style="left:926px;top:701.4px;width:7.4px;height:2px;background:#555;"></div>
<div class="r" style="left:938.8px;top:701.6px;width:125px;height:1.1px;background:#a8a8a8;"></div>
<div class="r" style="left:1001.1px;top:698.9px;width:1px;height:6.4px;background:#a8a8a8;"></div>
<div class="r" style="left:958.5px;top:695.1px;width:4.8px;height:13.2px;background:#555;"></div>
<div class="r" style="left:1069.2px;top:701.4px;width:9.4px;height:2px;background:#555;"></div>
<div class="r" style="left:1072.9px;top:697.5px;width:2px;height:10px;background:#555;"></div>
<div class="t" style="left:1098.94px;top:691.30px;height:20px;line-height:20px;font-size:14px;color:#666;transform:scaleX(0.9438);">40 %</div>
</div></body></html>
